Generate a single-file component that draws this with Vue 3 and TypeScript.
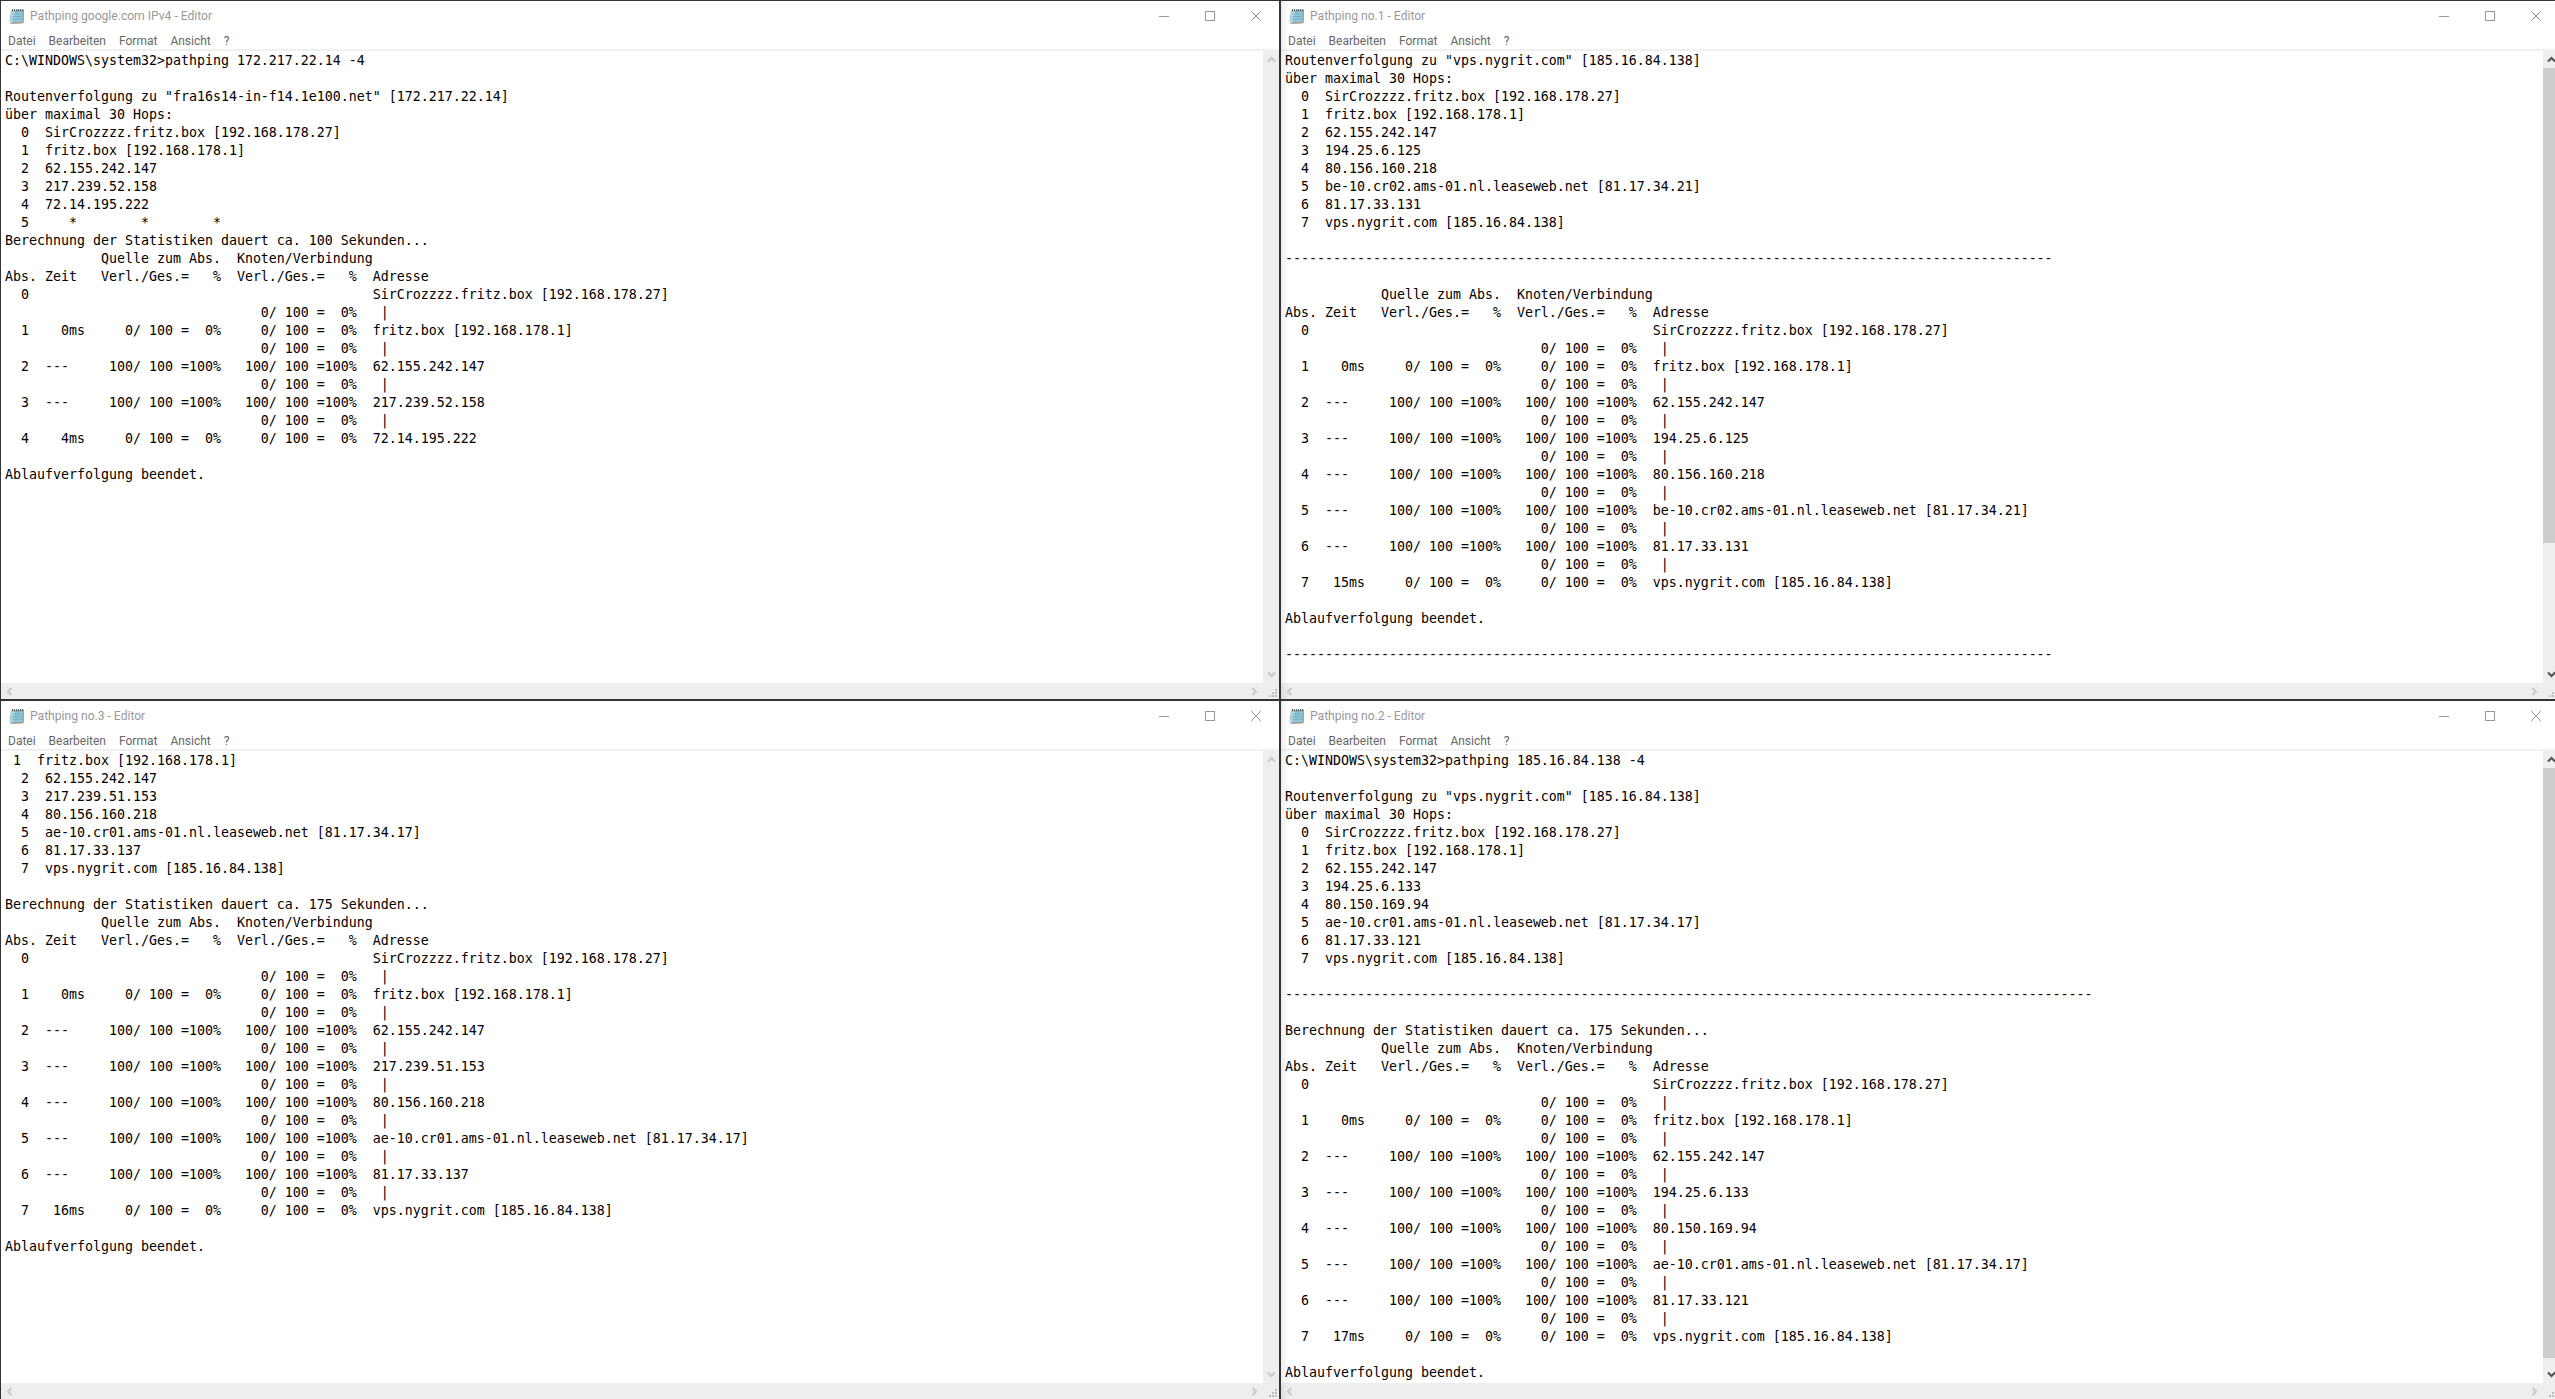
<script setup lang="ts">
interface Win {
  title: string
  lines: string[]
  thumb: { top: number; height: number } | null
}

const SIR = 'SirCrozzzz.fritz.box [192.168.178.27]'
const FRITZ = 'fritz.box [192.168.178.1]'
const VPS = 'vps.nygrit.com [185.16.84.138]'
const LINK = ' '.repeat(32) + '0/ 100 =  0%   |'

function hopList(addrs: string[]): string[] {
  return addrs.map((a, i) => `  ${i}  ${a}`)
}

function table(addrs: string[], firstTime: string, lastTime: string): string[] {
  const out: string[] = [
    '            Quelle zum Abs.  Knoten/Verbindung',
    'Abs. Zeit   Verl./Ges.=   %  Verl./Ges.=   %  Adresse',
    '  0' + ' '.repeat(43) + addrs[0],
  ]
  addrs.slice(1).forEach((a, idx) => {
    const n = idx + 1
    out.push(LINK)
    const t = n === 1 ? firstTime : n === addrs.length - 1 ? lastTime : ''
    if (t) {
      out.push(`  ${n}${t.padStart(7)}     0/ 100 =  0%     0/ 100 =  0%  ${a}`)
    } else {
      out.push(`  ${n}  ---     100/ 100 =100%   100/ 100 =100%  ${a}`)
    }
  })
  return out
}

const a1 = [SIR, FRITZ, '62.155.242.147', '217.239.52.158', '72.14.195.222']
const a2 = [SIR, FRITZ, '62.155.242.147', '194.25.6.125', '80.156.160.218', 'be-10.cr02.ams-01.nl.leaseweb.net [81.17.34.21]', '81.17.33.131', VPS]
const a3 = [SIR, FRITZ, '62.155.242.147', '217.239.51.153', '80.156.160.218', 'ae-10.cr01.ams-01.nl.leaseweb.net [81.17.34.17]', '81.17.33.137', VPS]
const a4 = [SIR, FRITZ, '62.155.242.147', '194.25.6.133', '80.150.169.94', 'ae-10.cr01.ams-01.nl.leaseweb.net [81.17.34.17]', '81.17.33.121', VPS]

const windows: Win[] = [
  {
    title: 'Pathping google.com IPv4 - Editor',
    thumb: null,
    lines: [
      'C:\\WINDOWS\\system32>pathping 172.217.22.14 -4',
      '',
      'Routenverfolgung zu "fra16s14-in-f14.1e100.net" [172.217.22.14]',
      'über maximal 30 Hops:',
      ...hopList(a1),
      '  5     *        *        *',
      'Berechnung der Statistiken dauert ca. 100 Sekunden...',
      ...table(a1, '0ms', '4ms'),
      '',
      'Ablaufverfolgung beendet.',
    ],
  },
  {
    title: 'Pathping no.1 - Editor',
    thumb: { top: 17, height: 475 },
    lines: [
      'Routenverfolgung zu "vps.nygrit.com" [185.16.84.138]',
      'über maximal 30 Hops:',
      ...hopList(a2),
      '',
      '-'.repeat(96),
      '',
      ...table(a2, '0ms', '15ms'),
      '',
      'Ablaufverfolgung beendet.',
      '',
      '-'.repeat(96),
    ],
  },
  {
    title: 'Pathping no.3 - Editor',
    thumb: null,
    lines: [
      ' 1  fritz.box [192.168.178.1]',
      ...hopList(a3).slice(2),
      '',
      'Berechnung der Statistiken dauert ca. 175 Sekunden...',
      ...table(a3, '0ms', '16ms'),
      '',
      'Ablaufverfolgung beendet.',
    ],
  },
  {
    title: 'Pathping no.2 - Editor',
    thumb: { top: 17, height: 590 },
    lines: [
      'C:\\WINDOWS\\system32>pathping 185.16.84.138 -4',
      '',
      'Routenverfolgung zu "vps.nygrit.com" [185.16.84.138]',
      'über maximal 30 Hops:',
      ...hopList(a4),
      '',
      '-'.repeat(101),
      '',
      'Berechnung der Statistiken dauert ca. 175 Sekunden...',
      ...table(a4, '0ms', '17ms'),
      '',
      'Ablaufverfolgung beendet.',
    ],
  },
]

const menu = ['Datei', 'Bearbeiten', 'Format', 'Ansicht', '?']
</script>

<template>
  <div class="desktop">
    <section v-for="(w, i) in windows" :key="i" class="window" :class="{ shaded: i % 2 === 1 }">
      <header class="titlebar">
        <svg class="app-icon" width="16" height="16" viewBox="0 0 16 16">
          <path d="M2.5 3 L14.5 2 L14 14.5 L1 15 Z" fill="#8fc6d8" stroke="#6c8ea0" stroke-width=".8" />
          <path d="M2.5 3 L6 2.7 L3 15 L1 15 Z" fill="#b7dde8" />
          <path d="M3 6 H13 M3 8.5 H13 M2.6 11 H13" stroke="#6fa5bb" stroke-width=".7" fill="none" />
          <path d="M3.5 1 V3.5 M5.5 1 V3.5 M7.5 1 V3.5 M9.5 1 V3.5 M11.5 1 V3.5 M13.5 1 V3.5" stroke="#5d6a72" stroke-width="1" />
          <path d="M14.5 3 L14.2 15 L2 15.5" stroke="#b79a6a" stroke-width=".8" fill="none" />
        </svg>
        <span class="title">{{ w.title }}</span>
        <div class="caption">
          <span class="cap-btn">
            <svg width="10" height="10" viewBox="0 0 10 10"><path d="M0 5.5 H10" stroke="#999" /></svg>
          </span>
          <span class="cap-btn">
            <svg width="10" height="10" viewBox="0 0 10 10"><rect x=".5" y=".5" width="9" height="9" fill="none" stroke="#999" /></svg>
          </span>
          <span class="cap-btn">
            <svg width="10" height="10" viewBox="0 0 10 10"><path d="M0 0 L10 10 M10 0 L0 10" stroke="#999" /></svg>
          </span>
        </div>
      </header>
      <nav class="menubar">
        <span v-for="m in menu" :key="m">{{ m }}</span>
      </nav>
      <div class="body">
        <pre class="text">{{ w.lines.join('\n') }}</pre>
        <aside class="vscroll" :class="{ active: w.thumb }">
          <span class="arrow-btn">
            <svg width="9" height="7" viewBox="0 0 9 7"><path d="M1 5.5 L4.5 2 L8 5.5" /></svg>
          </span>
          <div class="track">
            <div v-if="w.thumb" class="thumb" :style="{ height: w.thumb.height + 'px' }"></div>
          </div>
          <span class="arrow-btn">
            <svg width="9" height="7" viewBox="0 0 9 7"><path d="M1 1.5 L4.5 5 L8 1.5" /></svg>
          </span>
        </aside>
      </div>
      <footer class="hscroll">
        <span class="arrow-btn h">
          <svg width="7" height="9" viewBox="0 0 7 9"><path d="M5.5 1 L2 4.5 L5.5 8" /></svg>
        </span>
        <div class="h-track"></div>
        <span class="arrow-btn h">
          <svg width="7" height="9" viewBox="0 0 7 9"><path d="M1.5 1 L5 4.5 L1.5 8" /></svg>
        </span>
        <span class="grip">
          <svg width="12" height="12" viewBox="0 0 12 12" fill="#bbb">
            <rect x="8" y="2" width="2" height="2" />
            <rect x="5" y="5" width="2" height="2" /><rect x="8" y="5" width="2" height="2" />
            <rect x="2" y="8" width="2" height="2" /><rect x="5" y="8" width="2" height="2" /><rect x="8" y="8" width="2" height="2" />
          </svg>
        </span>
      </footer>
    </section>
  </div>
</template>

<style>
html, body { margin: 0; padding: 0; overflow: hidden; background: #333; }
</style>

<style scoped>
.desktop {
  width: 2555px;
  height: 1399px;
  box-sizing: border-box;
  padding: 1px 0 0 1px;
  overflow: hidden;
  background: #333;
  display: grid;
  grid-template-columns: 1278px 1278px;
  grid-template-rows: 698px 698px;
  gap: 2px;
}
.window {
  position: relative;
  display: flex;
  flex-direction: column;
  background: #fff;
  min-height: 0;
  overflow: hidden;
}
.shaded::after {
  content: '';
  position: absolute;
  left: 0;
  top: 0;
  bottom: 0;
  width: 8px;
  background: linear-gradient(to right, rgba(0, 0, 0, .07), rgba(0, 0, 0, 0));
  pointer-events: none;
}
.titlebar {
  height: 30px;
  display: flex;
  align-items: center;
  padding-left: 8px;
  flex: none;
}
.app-icon { flex: none; }
.title {
  margin-left: 5px;
  font: 12.1px Roboto, "Noto Sans", sans-serif;
  color: #999;
}
.caption { margin-left: auto; display: flex; }
.cap-btn {
  width: 46px;
  height: 30px;
  display: flex;
  align-items: center;
  justify-content: center;
}
.menubar {
  height: 20px;
  box-sizing: border-box;
  border-bottom: 2px solid #f0f0f0;
  display: flex;
  align-items: center;
  gap: 13px;
  padding: 2px 0 0 7px;
  font: 12px Roboto, "Noto Sans", sans-serif;
  color: #666;
  flex: none;
}
.body { flex: 1; min-height: 0; display: flex; }
.text {
  flex: 1;
  min-width: 0;
  margin: 0;
  padding: 1px 0 0 4px;
  overflow: hidden;
  white-space: pre;
  font-family: "DejaVu Sans Mono", "Liberation Mono", monospace;
  font-size: 13.29px;
  line-height: 18px;
  color: #000;
}
.vscroll {
  width: 16px;
  flex: none;
  background: #eee;
  display: flex;
  flex-direction: column;
}
.track { flex: 1; min-height: 0; }
.thumb { background: #cdcdcd; }
.arrow-btn {
  height: 17px;
  flex: none;
  display: flex;
  align-items: center;
  justify-content: center;
}
.arrow-btn svg path { fill: none; stroke: #c8c8c8; stroke-width: 2; }
.vscroll.active .arrow-btn svg path { stroke: #505050; }
.hscroll {
  height: 16px;
  flex: none;
  background: #eee;
  display: flex;
}
.arrow-btn.h { height: 16px; width: 17px; }
.h-track { flex: 1; }
.grip {
  width: 16px;
  height: 16px;
  display: flex;
  align-items: flex-end;
  justify-content: flex-end;
  flex: none;
}
</style>
